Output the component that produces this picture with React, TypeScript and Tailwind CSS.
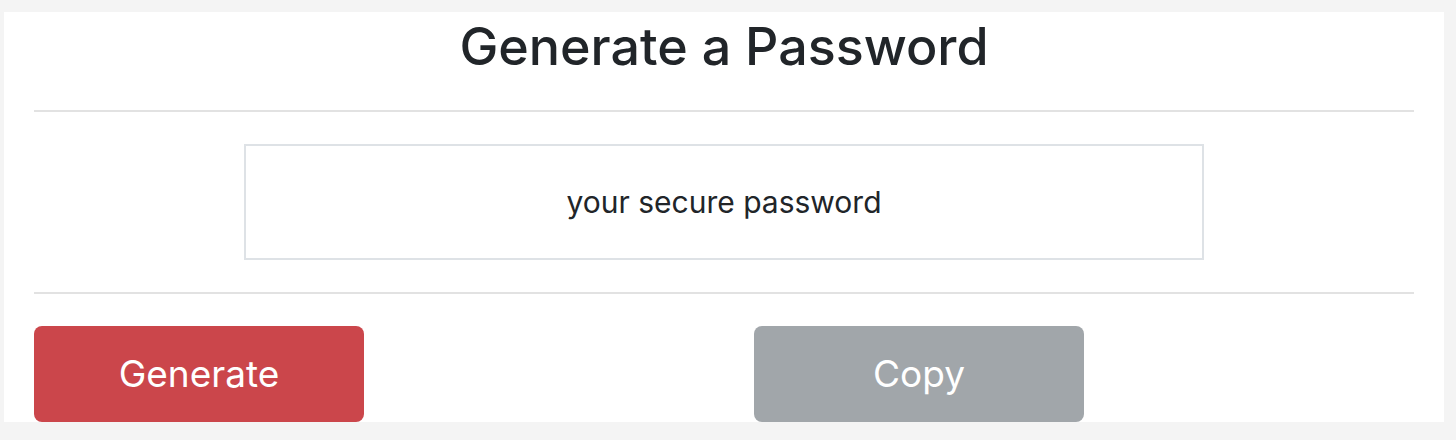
export default function App() {
    return (
        <div className="w-full min-h-screen bg-[#f4f4f4] pt-[12px] pl-[4px] pr-[12px]" style={{ fontFamily: "Inter, 'Liberation Sans', sans-serif" }}>
            <div className="bg-white h-[410px] px-[30px] flex flex-col">
                <h1 className="text-center text-[#212529] font-medium text-[52px] leading-[62px] h-[98px] pt-[4px]">
                    Generate a Password
                </h1>
                <hr className="border-0 border-t-2 border-[#e2e2e2]" />
                <div className="flex justify-center mt-[32px]">
                    <div className="w-[960px] h-[116px] border-2 border-[#dee2e6] flex items-center justify-center">
                        <p className="text-[30px] text-[#212529]">your secure password</p>
                    </div>
                </div>
                <hr className="border-0 border-t-2 border-[#e2e2e2] mt-[32px]" />
                <div className="flex gap-[390px] mt-[32px]">
                    <button className="w-[330px] h-[96px] rounded-lg bg-[#cb464b] text-white text-[37px]">
                        Generate
                    </button>
                    <button className="w-[330px] h-[96px] rounded-lg bg-[#a1a6aa] text-white text-[37px]">
                        Copy
                    </button>
                </div>
            </div>
        </div>
    );
}
